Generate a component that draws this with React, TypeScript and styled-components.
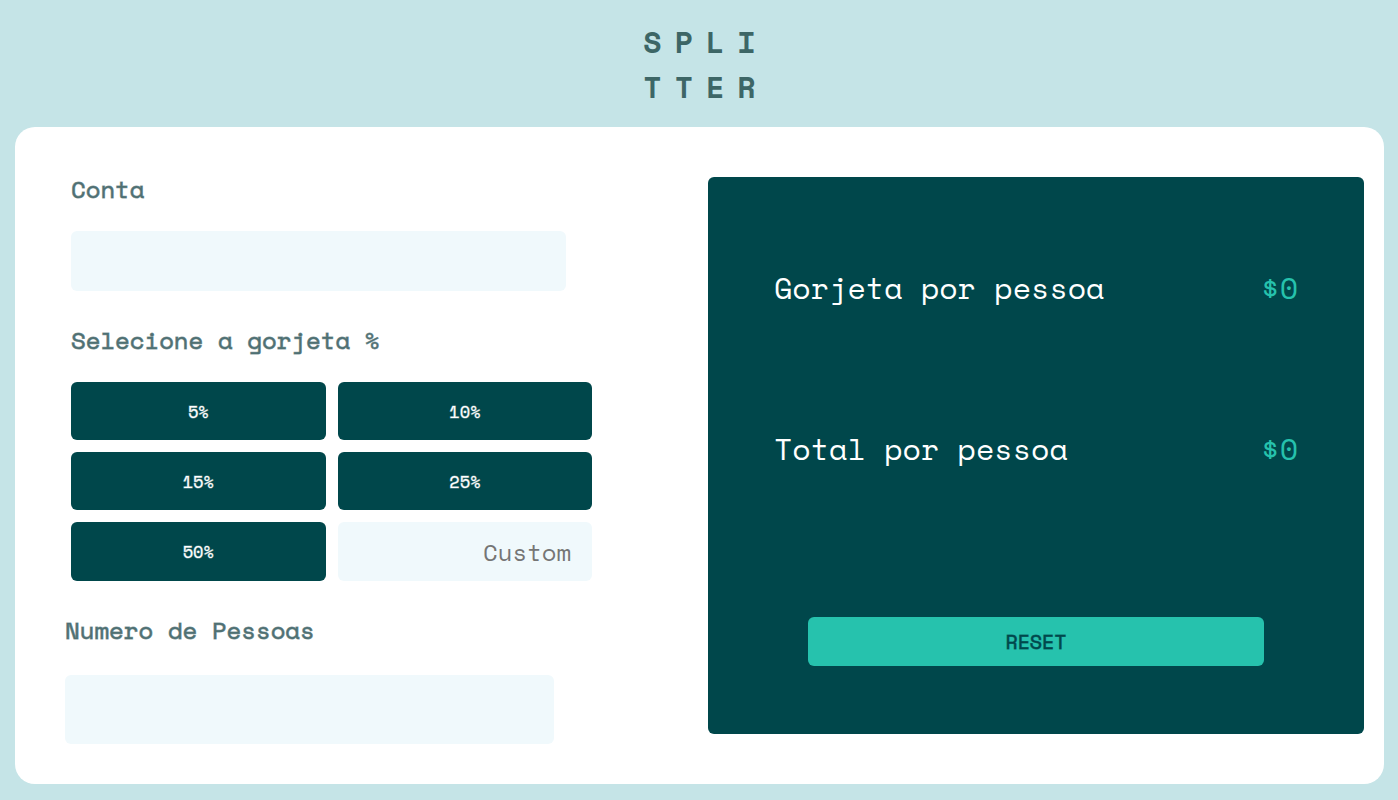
import React, { useState } from "react";
import styled, { createGlobalStyle, css } from "styled-components";

const colors = {
  page: "#c5e4e7",
  card: "#ffffff",
  dark: "#00474b",
  accent: "#26c2ad",
  label: "#4f7073",
  logo: "#3d6666",
  field: "#f0f9fc",
  placeholder: "#757575",
};

const GlobalStyle = createGlobalStyle`
  *, *::before, *::after {
    box-sizing: border-box;
  }
  body {
    margin: 0;
    background: ${colors.page};
    font-family: "Space Mono", "Liberation Mono", monospace;
  }
`;

const Header = styled.header`
  display: flex;
  justify-content: center;
  padding: 19px 0 18px 14px;
`;

const Logo = styled.h1`
  margin: 0;
  color: ${colors.logo};
  font-size: 30px;
  line-height: 45px;
  font-weight: 700;
  letter-spacing: 13px;
`;

const Card = styled.main`
  display: flex;
  margin: 0 14px 16px 15px;
  padding: 50px 20px 40px 50px;
  border-radius: 20px;
  background: ${colors.card};
`;

const Form = styled.form`
  flex: 1;
  min-width: 0;
  display: flex;
  flex-direction: column;
  gap: 37px;
`;

const groupStyle = css`
  display: flex;
  flex-direction: column;
  margin: 0;
  border: 0;
`;

const BillGroup = styled.div`
  ${groupStyle}
  gap: 30px;
  width: 82%;
  padding: 0 0 0 6px;
`;

const PeopleGroup = styled.div`
  ${groupStyle}
  gap: 33px;
  width: 76%;
`;

const strongText = css`
  font-weight: 400;
  -webkit-text-stroke: 1px color-mix(in srgb, currentColor 70%, transparent);
`;

const labelStyle = css`
  ${strongText}
  color: ${colors.label};
  font-size: 24px;
  line-height: 24px;
`;

const Label = styled.label`
  ${labelStyle}
`;

const TipLabel = styled.div`
  ${labelStyle}
`;

const Field = styled.input<{ $height: number; $width?: string }>`
  width: ${({ $width }) => $width ?? "100%"};
  height: ${({ $height }) => $height}px;
  padding: 0 21px;
  border: 0;
  border-radius: 6px;
  background: ${colors.field};
  color: ${colors.dark};
  font-family: inherit;
  font-size: 24px;
  text-align: right;

  &::placeholder {
    color: ${colors.placeholder};
    opacity: 1;
  }
  &:focus-visible {
    outline: 2px solid ${colors.accent};
  }
`;

const TipGrid = styled.div`
  display: grid;
  grid-template-columns: 1fr 1fr;
  gap: 12px;
`;

const TipButton = styled.button<{ $selected: boolean }>`
  min-height: 58px;
  padding: 0;
  border: 0;
  border-radius: 6px;
  background: ${({ $selected }) => ($selected ? colors.accent : colors.dark)};
  color: ${({ $selected }) => ($selected ? colors.dark : "#ffffff")};
  font-family: inherit;
  font-size: 17px;
  -webkit-text-stroke: 1px color-mix(in srgb, currentColor 40%, transparent);
  cursor: pointer;
`;

const Results = styled.section`
  display: flex;
  flex-direction: column;
  flex: 0 1 656px;
  margin-bottom: 10px;
  padding: 89px 66px 68px;
  border-radius: 6px;
  background: ${colors.dark};
`;

const ResultRows = styled.div`
  display: flex;
  flex-direction: column;
  gap: 117px;
`;

const ResultRow = styled.div`
  display: flex;
  align-items: baseline;
  justify-content: space-between;
  color: #ffffff;
  font-size: 30px;
  line-height: 44px;
`;

const Amount = styled.output`
  color: ${colors.accent};
`;

const ResetButton = styled.button`
  ${strongText}
  align-self: center;
  width: 87%;
  height: 49px;
  margin-top: auto;
  border: 0;
  border-radius: 6px;
  background: ${colors.accent};
  color: ${colors.dark};
  font-family: inherit;
  font-size: 20px;
  cursor: pointer;
`;

const tips = [5, 10, 15, 25, 50];

const format = (value: number) => (value > 0 ? value.toFixed(2) : "0");

export default function App() {
  const [bill, setBill] = useState("");
  const [tip, setTip] = useState<number | null>(null);
  const [custom, setCustom] = useState("");
  const [people, setPeople] = useState("");

  const count = Number(people) || 0;
  const total = Number(bill) || 0;
  const rate = (custom ? Number(custom) || 0 : tip ?? 0) / 100;
  const tipEach = count > 0 ? (total * rate) / count : 0;
  const totalEach = count > 0 ? (total * (1 + rate)) / count : 0;

  const reset = () => {
    setBill("");
    setTip(null);
    setCustom("");
    setPeople("");
  };

  return (
    <>
      <GlobalStyle />
      <Header>
        <Logo>
          SPLI
          <br />
          TTER
        </Logo>
      </Header>
      <Card>
        <Form onSubmit={(e) => e.preventDefault()}>
          <BillGroup>
            <Label htmlFor="bill">Conta</Label>
            <Field
              id="bill"
              inputMode="decimal"
              $height={60}
              $width="95%"
              value={bill}
              onChange={(e) => setBill(e.target.value)}
            />
          </BillGroup>
          <BillGroup role="group" aria-labelledby="tip-label">
            <TipLabel id="tip-label">Selecione a gorjeta %</TipLabel>
            <TipGrid>
              {tips.map((value) => (
                <TipButton
                  key={value}
                  type="button"
                  $selected={tip === value}
                  onClick={() => {
                    setTip(value);
                    setCustom("");
                  }}
                >
                  {value}%
                </TipButton>
              ))}
              <Field
                aria-label="Custom"
                placeholder="Custom"
                inputMode="decimal"
                $height={59}
                value={custom}
                onChange={(e) => {
                  setCustom(e.target.value);
                  setTip(null);
                }}
              />
            </TipGrid>
          </BillGroup>
          <PeopleGroup>
            <Label htmlFor="people">Numero de Pessoas</Label>
            <Field
              id="people"
              inputMode="numeric"
              $height={69}
              value={people}
              onChange={(e) => setPeople(e.target.value)}
            />
          </PeopleGroup>
        </Form>
        <Results>
          <ResultRows>
            <ResultRow>
              <span>Gorjeta por pessoa</span>
              <Amount>${format(tipEach)}</Amount>
            </ResultRow>
            <ResultRow>
              <span>Total por pessoa</span>
              <Amount>${format(totalEach)}</Amount>
            </ResultRow>
          </ResultRows>
          <ResetButton type="button" onClick={reset}>
            RESET
          </ResetButton>
        </Results>
      </Card>
    </>
  );
}
